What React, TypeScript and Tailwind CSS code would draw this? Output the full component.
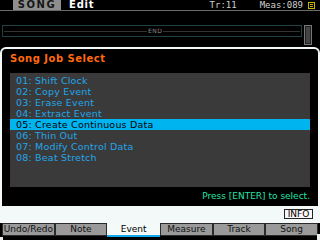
import React from "react";

const items = [
  "01: Shift Clock",
  "02: Copy Event",
  "03: Erase Event",
  "04: Extract Event",
  "05: Create Continuous Data",
  "06: Thin Out",
  "07: Modify Control Data",
  "08: Beat Stretch",
];

const tabs = ["Undo/Redo", "Note", "Event", "Measure", "Track", "Song"];

export default function App() {
  return (
    <div
      className="relative w-[320px] h-[240px] bg-black overflow-hidden flex flex-col"
      style={{ fontFamily: '"DejaVu Sans", sans-serif' }}
    >
      {/* header */}
      <div className="h-[10px] flex items-stretch">
        <div className="w-[13px]" />
        <div className="w-[48px] bg-[#8e8e8e] text-[#161616] font-bold text-[10px] leading-[10px] tracking-[1.5px] flex items-center justify-center">
          SONG
        </div>
        <div className="ml-[8px] text-white font-bold text-[10px] leading-[10px] tracking-[0.8px]">Edit</div>
        <div className="flex-1" />
        <div
          className="text-[#cfcfcf] text-[9px] leading-[10px]"
          style={{ fontFamily: '"DejaVu Sans Mono", monospace' }}
        >
          Tr:11
        </div>
        <div
          className="ml-[23px] text-[#cfcfcf] text-[9px] leading-[10px]"
          style={{ fontFamily: '"DejaVu Sans Mono", monospace' }}
        >
          Meas:089
        </div>
        <div className="ml-[5px] mr-[5px] mt-[2px] w-[7px] h-[7px] border border-[#c8b400] flex flex-col justify-center gap-[1px] px-[1px]">
          <div className="h-px bg-[#c8b400]" />
          <div className="h-px bg-[#c8b400]" />
        </div>
      </div>
      <div className="h-px bg-[#6a6a6a]" />
      <div className="h-[14px]" />
      {/* track row */}
      <div className="h-[20px] flex items-start">
        <div className="ml-[2px] w-[300px] h-[12px] border border-[#1f4040] flex items-center pl-px pr-px">
          <div className="w-[143px] h-px bg-[#333]" />
          <div className="text-[#8a8a8a] text-[6px] leading-[6px] px-[1px] tracking-[0.5px]">END</div>
          <div className="flex-1 h-px bg-[#333]" />
        </div>
        <div className="ml-[2px] w-[8px] h-[20px] border border-[#777] bg-[#222] p-[1px]">
          <div className="w-full h-full bg-[#444]" />
        </div>
      </div>
      <div className="h-[2px]" />
      {/* dialog */}
      <div className="h-[176px] bg-[#f2f9f8] rounded-t-[6px] pt-[2px] px-[2px] flex flex-col">
        <div className="h-[157px] bg-black rounded-t-[4px] pl-[8px] pr-[6px] flex flex-col">
          <div className="pt-[4px] h-[16px] text-[#ff6a10] font-bold text-[10px] leading-[12px] tracking-[0.5px]">
            Song Job Select
          </div>
          <div className="mt-[8px] w-[300px] h-[114px] bg-[#3a3a3a] pt-[2px] flex flex-col">
            {items.map((t, i) => (
              <div
                key={t}
                className={
                  i === 4
                    ? "h-[11px] leading-[11px] pl-[6px] text-[9.5px] tracking-[0.2px] bg-[#00b4f0] text-black"
                    : "h-[11px] leading-[11px] pl-[6px] text-[9.5px] tracking-[0.2px] text-[#22a6ea]"
                }
              >
                {t}
              </div>
            ))}
          </div>
          <div className="mt-[4px] pr-[2px] text-right text-[#24e2a4] text-[9px] leading-[10px]">
            Press [ENTER] to select.
          </div>
        </div>
        <div className="flex-1 flex items-start justify-end pr-[5px] pt-[3px]">
          <div className="w-[29px] h-[10px] border border-[#222] bg-[#f8f8f8] text-black text-[9px] leading-[8px] flex items-center justify-center">
            INFO
          </div>
        </div>
      </div>
      {/* tabs */}
      <div className="h-[14px] px-[2px] grid grid-cols-6 bg-black">
        {tabs.map((t) =>
          t === "Event" ? (
            <div
              key={t}
              className="bg-[#f4faf8] border-b-2 border-[#10a8e8] text-black text-[9px] leading-[12px] text-center"
            >
              {t}
            </div>
          ) : (
            <div
              key={t}
              className="h-[13px] bg-[#9a9a9a] border border-[#2a2a2a] text-[#111] text-[9px] leading-[11px] text-center whitespace-nowrap"
            >
              {t}
            </div>
          )
        )}
      </div>
      <div className="absolute left-0 bottom-0 w-[3px] h-[3px] bg-[#e8f0f0]" />
      <div className="absolute right-0 bottom-0 w-[3px] h-[6px] bg-[#e8f0f0]" />
    </div>
  );
}
